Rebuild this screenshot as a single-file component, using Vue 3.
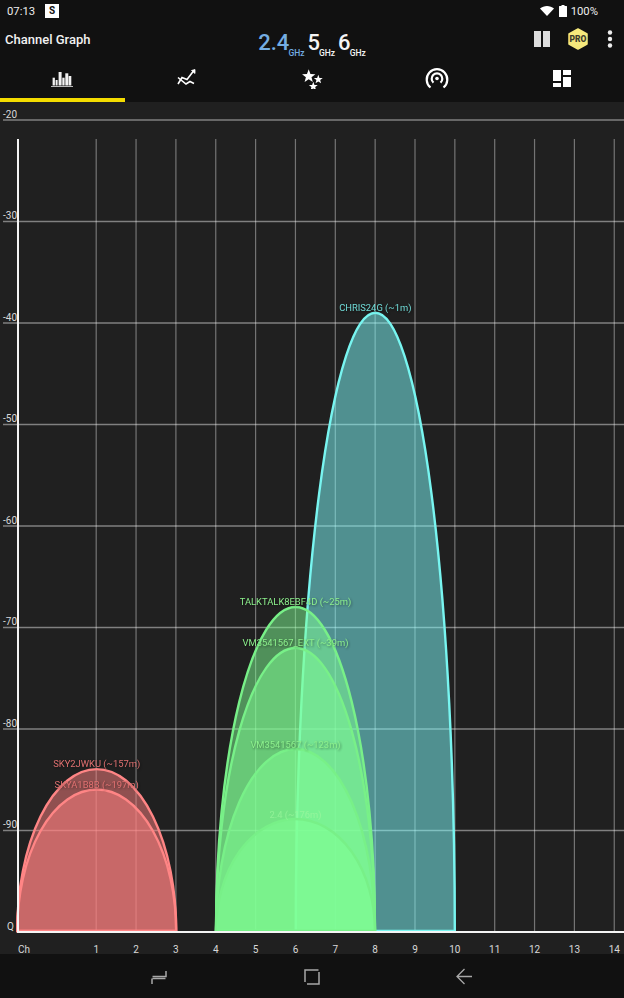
<script setup>
const B = 931
const hLines = [
  { y: 120, t: '-20' }, { y: 221.5, t: '-30' }, { y: 323, t: '-40' }, { y: 424.5, t: '-50' },
  { y: 526, t: '-60' }, { y: 627.5, t: '-70' }, { y: 729, t: '-80' }, { y: 830.5, t: '-90' }
]
const channels = Array.from({ length: 14 }, (_, i) => ({ n: i + 1, x: 96.2 + i * 39.85 }))
const curve = (cx, top) => `M${cx - 79.5} ${B}A79.5 ${B - top} 0 0 1 ${cx + 79.5} ${B}Z`
const nets = [
  { id: 'c', kind: 'cyan', cx: 375.3, top: 312.5, label: 'CHRIS24G (~1m)', ly: 310.5 },
  { id: 'g1', kind: 'green', cx: 295.5, top: 607, label: 'TALKTALK8EBF4D (~25m)', ly: 604.5 },
  { id: 'g2', kind: 'green', cx: 295.5, top: 648, label: 'VM3541567_EXT (~39m)', ly: 645.5 },
  { id: 'g3', kind: 'green', cx: 295.5, top: 749, label: 'VM3541567 (~123m)', ly: 747.5 },
  { id: 'g4', kind: 'green', cx: 295.5, top: 819, label: '2.4 (~176m)', ly: 817.5, faint: true },
  { id: 'p1', kind: 'pink', cx: 96.7, top: 769, label: 'SKY2JWKU (~157m)', ly: 766.5 },
  { id: 'p2', kind: 'pink', cx: 96.7, top: 789.5, label: 'SKYA1B8B (~197m)', ly: 787.5 }
]
const curves = nets.map(n => ({ ...n, d: curve(n.cx, n.top) }))
const star = (cx, cy, r) => {
  const pts = []
  for (let i = 0; i < 10; i++) {
    const a = -Math.PI / 2 + i * Math.PI / 5
    const q = i % 2 ? r * 0.42 : r
    pts.push(`${(cx + q * Math.cos(a)).toFixed(2)},${(cy + q * Math.sin(a)).toFixed(2)}`)
  }
  return pts.join(' ')
}
</script>

<template>
  <div class="screen">
    <div class="status">
      <span class="time">07:13</span>
      <span class="s-badge">S</span>
      <span class="spacer"></span>
      <svg class="wifi" width="14" height="10" viewBox="0 0 14 10"><path d="M0 2.6C3.8-.8 10.200-.8 14 2.600L7 10Z" fill="#fff"/></svg>
      <svg class="battery" width="8" height="12" viewBox="0 0 8 12"><path d="M2.500 0h3v1H7.500a.5.5 0 0 1 .5.5V11.500a.5.5 0 0 1-.5.5H.5a.5.5 0 0 1-.5-.5V1.500A.5.5 0 0 1 .5 1h2z" fill="#fff"/></svg>
      <span class="pct">100%</span>
    </div>

    <div class="toolbar">
      <div class="title">Channel Graph</div>
      <div class="bands">
        <div class="band active"><span class="num">2.4</span><span class="ghz">GHz</span></div>
        <div class="band"><span class="num">5</span><span class="ghz">GHz</span></div>
        <div class="band"><span class="num">6</span><span class="ghz">GHz</span></div>
      </div>
      <div class="actions">
        <svg class="pause" width="16" height="16" viewBox="0 0 16 16"><rect width="7" height="16" fill="#ddd"/><rect x="9" width="7" height="16" fill="#ddd"/></svg>
        <div class="pro">
          <svg width="20" height="22" viewBox="0 0 20 22"><path d="M10 1 19 6V16L10 21 1 16V6Z" fill="#f6e97c" stroke="#f6e97c" stroke-width="1.500" stroke-linejoin="round"/></svg>
          <span class="pro-text">PRO</span>
        </div>
        <svg class="dots" width="6" height="18" viewBox="0 0 6 18"><circle cx="3" cy="2.500" r="2.200" fill="#eee"/><circle cx="3" cy="9" r="2.200" fill="#eee"/><circle cx="3" cy="15.500" r="2.200" fill="#eee"/></svg>
      </div>
    </div>

    <div class="tabs">
      <div class="tab active">
        <svg width="22" height="18" viewBox="0 -1 22 18" fill="#f2f2f2">
          <rect x="0" y="16" width="22" height="1.600" opacity="0.75"/>
          <rect x="1.600" y="7.700" width="2.300" height="7.800"/>
          <rect x="4.600" y="10" width="2" height="5.500"/>
          <rect x="7.600" y="2" width="3" height="13.500"/>
          <rect x="11.300" y="7.700" width="2.300" height="7.800"/>
          <rect x="14.300" y="3.300" width="3" height="12.200"/>
          <rect x="17.600" y="6" width="2.700" height="9.500"/>
        </svg>
      </div>
      <div class="tab">
        <svg width="20" height="18" viewBox="0 0 20 18" fill="none" stroke="#fff" stroke-width="1.600">
          <path d="M1 15 5 8.500 10 10.500 16.500 2"/>
          <path d="M1 8.500 9 15 13 12.500 17 14.500"/>
          <path d="M14.500 1.500 18 0.500 18 4.500Z" fill="#fff" stroke-width="0.800"/>
        </svg>
      </div>
      <div class="tab">
        <svg width="22" height="22" viewBox="-1 0 22 22" fill="#fff">
          <polygon :points="star(6.700, 9.300, 7)"/>
          <polygon :points="star(16.300, 12.500, 4.700)"/>
          <polygon :points="star(11.300, 19.500, 4.700)"/>
        </svg>
      </div>
      <div class="tab">
        <svg width="24" height="22" viewBox="0 0 24 22" fill="none" stroke="#fff" stroke-width="2.200">
          <path d="M5.500 20.500A10.300 10.300 0 1 1 18.500 20.500"/>
          <path d="M8.500 15.700A5.300 5.300 0 1 1 15.500 15.700"/>
          <circle cx="12" cy="11.500" r="1.800" fill="#fff" stroke="none"/>
        </svg>
      </div>
      <div class="tab">
        <svg width="18" height="17" viewBox="0 0 18 17" fill="#fff">
          <rect width="8" height="11"/><rect y="13" width="8" height="4"/>
          <rect x="10" width="8" height="5"/><rect x="10" y="7" width="8" height="10"/>
        </svg>
      </div>
    </div>

    <div class="chart">
      <svg class="plot" width="624" height="852" viewBox="0 102 624 852">
        <g class="hgrid">
          <line v-for="h in hLines" :key="h.t" x1="3" x2="624" :y1="h.y" :y2="h.y"/>
        </g>
        <g class="vgrid">
          <line v-for="c in channels" :key="c.n" :x1="c.x" :x2="c.x" y1="139" :y2="B"/>
        </g>
        <text v-for="h in hLines" :key="'t' + h.t" class="axis-text" x="3" :y="h.y - 2.500">{{ h.t }}</text>
        <text class="axis-text" x="7" y="929.500">Q</text>
        <text class="axis-text" x="18" y="952.500">Ch</text>
        <text v-for="c in channels" :key="'c' + c.n" class="axis-text mid" :x="c.x" y="952.500">{{ c.n }}</text>

        <path v-for="c in curves" :key="c.id" :d="c.d" :class="['curve', c.kind]"/>
        <path d="M18 139V932H624" class="axis"/>
        <text
          v-for="c in curves"
          :key="'l' + c.id"
          :x="c.cx"
          :y="c.ly"
          :class="['net-label', c.kind, { faint: c.faint }]"
        >{{ c.label }}</text>
      </svg>
    </div>

    <div class="nav">
      <svg class="nav-icon" width="16" height="15" viewBox="0 0 16 15" fill="none" stroke="#a8a8a8" stroke-width="1.500">
        <path d="M15 1V6.500H1.500M1 8.500V14M1.500 8.500H14.500"/>
      </svg>
      <svg class="nav-icon" width="16" height="16" viewBox="0 0 16 16" fill="none" stroke="#a8a8a8" stroke-width="1.500">
        <path d="M1 13V1H14.500M15 3V15H3"/>
      </svg>
      <svg class="nav-icon" width="16" height="17" viewBox="0 0 16 17" fill="none" stroke="#a8a8a8" stroke-width="1.300">
        <path d="M8.500 1 1 8.500 8.500 16M1 8.500H16"/>
      </svg>
    </div>
  </div>
</template>

<style>
html, body { margin: 0; background: #111; }
</style>

<style scoped>
.screen {
  width: 624px;
  height: 998px;
  display: flex;
  flex-direction: column;
  overflow: hidden;
  background: #111;
  color: #fff;
  font-family: Roboto, "Liberation Sans", sans-serif;
}
.status {
  height: 22px;
  display: flex;
  align-items: center;
  padding: 0 26px 0 7px;
  font-size: 11.300px;
  color: #eee;
  flex: none;
}
.s-badge {
  width: 14px;
  height: 14px;
  margin-left: 10px;
  background: #fff;
  color: #111;
  font-size: 10px;
  font-weight: 700;
  line-height: 14px;
  text-align: center;
}
.spacer { flex: 1; }
.battery { margin-left: 5px; }
.pct { margin-left: 4px; }
.toolbar {
  height: 40px;
  flex: none;
  display: grid;
  grid-template-columns: 1fr auto 1fr;
  align-items: center;
}
.title {
  padding-left: 5px;
  padding-bottom: 6px;
  font-size: 13px;
  font-weight: 500;
  color: #f2f2f2;
}
.bands {
  display: flex;
  gap: 3px;
  padding-top: 2px;
}
.band {
  display: flex;
  align-items: flex-end;
  color: #f5f5f5;
}
.band.active { color: #74ade2; }
.num {
  font-size: 22px;
  font-weight: 500;
  line-height: 22px;
}
.ghz {
  font-size: 8.500px;
  font-weight: 500;
  line-height: 9px;
  margin-bottom: -4px;
  margin-left: -1px;
}
.actions {
  display: flex;
  align-items: center;
  justify-content: flex-end;
  padding-right: 11px;
  padding-bottom: 6px;
}
.pro {
  position: relative;
  width: 20px;
  height: 22px;
  margin-left: 18px;
  margin-right: 19px;
}
.pro svg { display: block; }
.pro-text {
  position: absolute;
  inset: 0;
  text-align: center;
  line-height: 22px;
  font-size: 8.500px;
  font-weight: 900;
  color: #3d3d2c;
}
.tabs {
  height: 40px;
  flex: none;
  display: grid;
  grid-template-columns: repeat(5, 1fr);
}
.tab {
  box-sizing: border-box;
  display: flex;
  align-items: center;
  justify-content: center;
  padding-bottom: 4px;
  border-bottom: 4px solid transparent;
}
.tab.active { border-bottom-color: #f4dc00; }
.chart {
  flex: 1;
  background: #202020;
  min-height: 0;
}
.plot { display: block; }
.hgrid line { stroke: rgba(255, 255, 255, 0.43); stroke-width: 1.300; }
.vgrid line { stroke: rgba(255, 255, 255, 0.38); stroke-width: 1.200; }
.axis { fill: none; stroke: #f4f4f4; stroke-width: 2; }
.axis-text {
  font-size: 10px;
  fill: #d8d8d8;
}
.mid { text-anchor: middle; }
.curve { stroke-width: 2.400; fill-opacity: 0.5; }
.curve.cyan { fill: #80ffff; stroke: #78f5f0; }
.curve.green { fill: #80ff94; stroke: #78f088; }
.curve.pink { fill: #ff8080; stroke: #ff8585; }
.net-label {
  font-size: 9.400px;
  text-anchor: middle;
  filter: drop-shadow(1px 1px 1px rgba(0, 0, 0, 0.45));
}
.net-label.cyan { fill: #70dcd8; }
.net-label.green { fill: #8cf08c; }
.net-label.pink { fill: #e07070; }
.net-label.faint { filter: none; fill: #a0f8a0; opacity: 0.65; }
.nav {
  height: 44px;
  flex: none;
  position: relative;
  background: #111;
}
.nav-icon { position: absolute; top: 15px; }
.nav-icon:nth-child(1) { left: 151px; top: 16px; }
.nav-icon:nth-child(2) { left: 304px; }
.nav-icon:nth-child(3) { left: 456px; top: 14px; }
</style>
